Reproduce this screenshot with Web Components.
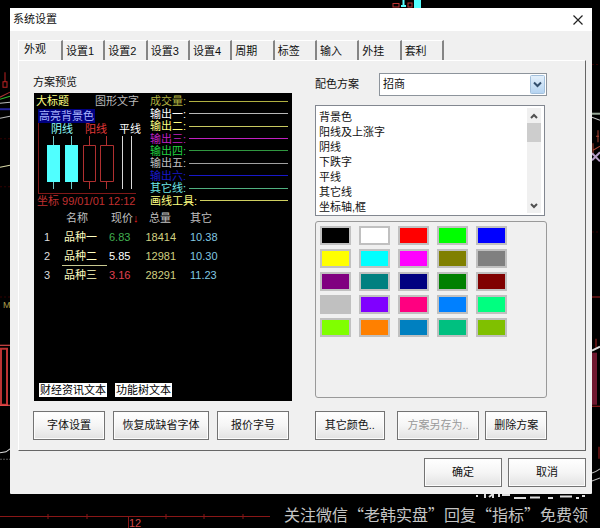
<!DOCTYPE html>
<html lang="zh-CN">
<head>
<meta charset="utf-8">
<title>系统设置</title>
<style>
  html, body { margin: 0; background: #000; }
  body { font: 11px/15px "Liberation Sans", "Noto Sans CJK SC", sans-serif; color: #111; }
</style>
</head>
<body>
<trade-desktop>
  <settings-dialog heading="系统设置">
    <tab-strip slot="tabs" labels="外观,设置1,设置2,设置3,设置4,周期,标签,输入,外挂,套利"></tab-strip>
    <scheme-preview slot="left"></scheme-preview>
    <button-row slot="left">
      <win-button style="--grow:72">字体设置</win-button>
      <win-button style="--grow:96">恢复成缺省字体</win-button>
      <win-button style="--grow:72">报价字号</win-button>
    </button-row>
    <scheme-select slot="right"></scheme-select>
    <item-list slot="right" items="背景色|阳线及上涨字|阴线|下跌字|平线|其它线|坐标轴,框"></item-list>
    <swatch-grid slot="right" colors="#000000 #ffffff #ff0000 #00ff00 #0000ff #ffff00 #00ffff #ff00ff #808000 #808080 #800080 #008080 #000080 #008000 #800000 #c0c0c0 #8000ff #ff0080 #0080ff #00ff80 #80ff00 #ff8000 #0080c0 #00c080 #80c000"></swatch-grid>
    <button-row slot="right" style="--gap:12px">
      <win-button style="--grow:70">其它颜色..</win-button>
      <button-row style="--grow:151;--gap:6px">
        <win-button style="--grow:83" disabled>方案另存为..</win-button>
        <win-button style="--grow:62">删除方案</win-button>
      </button-row>
    </button-row>
    <win-button slot="actions">确定</win-button>
    <win-button slot="actions">取消</win-button>
  </settings-dialog>
  <span slot="caption">关注微信“老韩实盘”回复“指标”免费领</span>
</trade-desktop>

<script>
const define = (name, html, setup) => {
  const template = document.createElement('template');
  template.innerHTML = html;
  customElements.define(name, class extends HTMLElement {
    constructor() {
      super();
      this.attachShadow({ mode: 'open' }).append(template.content.cloneNode(true));
    }
    connectedCallback() {
      if (this.ready) return;
      this.ready = true;
      if (setup) setup(this, this.shadowRoot);
    }
  });
};

define('trade-desktop', `
<style>
  :host { display: grid; grid-template-rows: 1fr auto; min-height: 100vh; box-sizing: border-box; padding: 8px 8px 0 10px; position: relative; }
  .chart { position: absolute; inset: 0; width: 100%; height: 100%; }
  ::slotted(*) { position: relative; }
  footer { position: relative; padding: 8px 4px 3px; text-align: right; font: 16px/24px "Noto Sans CJK SC", sans-serif; color: #c4c4c4; }
</style>
<svg class="chart" viewBox="0 0 600 528" preserveAspectRatio="none" fill="none" aria-hidden="true">
  <g stroke="#300" stroke-dasharray="2 2"><path d="M0 296.500H10M592 64.500H600M592 231.500H600M0 138.500H10M0 186.500H10"/></g>
  <path d="M5 72V81M3 81.500H7V87H3Z" stroke="#b22"/>
  <path d="M0 97L10 92" stroke="#a33"/><path d="M0 99L10 96" stroke="#3b3"/>
  <path d="M0 103L10 102M0 118L10 116" stroke="#bbb"/><path d="M0 109H10" stroke="#229" stroke-width="2"/>
  <path d="M0 167L10 165" stroke="#dda"/>
  <path d="M1 348V404H7V348Z" stroke="#b33" stroke-width="2"/><path d="M0 344.500H10M0 404.500H10" stroke="#f55"/>
  <path d="M0 452L6 451L10 448" stroke="#ddd"/><path d="M0 458.500H10" stroke="#555" stroke-dasharray="2 1"/>
  <path d="M0 515.500H270M128.500 515V528" stroke="#8a1717"/>
  <path d="M48 513V518M87 513V518M166 513V518M204 513V518M243 513V518" stroke="#8a1717"/>
  <path d="M393 3.500H399V7H393ZM408 3H412V7H408Z" stroke="#b33"/>
  <path d="M403.500 0V6M401 6H406" stroke="#5ff" stroke-width="2"/><path d="M414 0H421V8H414Z" fill="#5ff"/>
  <path d="M592 113.500H600" stroke="#9a9" stroke-width="2"/><path d="M592 117L600 120" stroke="#ccc"/>
  <path d="M596 136H599M598 130V142M593 143V155M593 150L600 146" stroke="#a43"/>
  <path d="M592 160L600 152M592 153L600 161" stroke="#b8a0c8" stroke-width="2"/>
  <path d="M592 296.500H600M596 338V347M592 405.500H600M599 446V458" stroke="#a22"/>
  <path d="M592 350L600 346" stroke="#ddd" stroke-width="2"/>
  <path d="M592 352H597V404H592Z" fill="#701830"/>
  <path d="M592 472Q596 471 600 468M592 480L600 477" stroke="#bbb"/>
  <path d="M476 495H478M485 493V497M489 496L493 493V497M499 493V496M502 494H510M514 497H526M530 496.500H540M548 497H553M560 495.500H572M576 497H579M582 495H585" stroke="#ddd" stroke-width="2"/>
  <text x="3" y="307" font-size="9" fill="#aa9d4c">M</text>
  <text x="129" y="526" font-size="11" fill="#d04848">12</text>
</svg>
<slot></slot>
<footer><slot name="caption"></slot></footer>`);

define('settings-dialog', `
<style>
  :host { display: grid; grid-template-rows: 23px 1fr; background: #f0f0f0; border-radius: 1px; }
  header { display: flex; align-items: center; justify-content: space-between; padding: 0 8px 0 3px; background: #fff; }
  h1 { margin: 0; font: inherit; }
  .close { border: 0; padding: 0; background: none; display: grid; }
  .client { padding: 9px 6px 7px 8px; display: flex; flex-direction: column; }
  .panel { flex: 1; display: grid; grid-template-columns: 260fr 232fr; column-gap: 22px; padding: 12px 38px 10px 14px;
    border: 1px solid #fff; border-right-color: #666; border-bottom-color: #666; }
  .left { display: grid; grid-template-rows: 20px 1fr auto; min-width: 0; }
  .left div { padding-top: 2px; }
  .left ::slotted(button-row) { margin-top: 10px; }
  .right { display: grid; grid-template-rows: auto auto 1fr auto; min-width: 0; }
  .actions { display: flex; justify-content: flex-end; gap: 6px; margin-top: 7px; }
  .actions ::slotted(*) { flex: 0 0 78px; }
</style>
<header><h1></h1>
  <button class="close" aria-label="关闭"><svg width="12" height="12" viewBox="0 0 12 12"><path d="M1.500 1.500L10.500 10.500M10.500 1.500L1.500 10.500" stroke="#222" stroke-width="1.200"/></svg></button>
</header>
<div class="client">
  <slot name="tabs"></slot>
  <div class="panel">
    <section class="left"><div>方案预览</div><slot name="left"></slot></section>
    <section class="right"><slot name="right"></slot></section>
  </div>
  <div class="actions"><slot name="actions"></slot></div>
</div>`, (host, root) => { root.querySelector('h1').textContent = host.getAttribute('heading'); });

define('tab-strip', `
<style>
  :host { display: flex; height: 20px; padding-right: 25%; }
  button { box-sizing: border-box; flex: 1 1 42px; padding: 2px 0 0 3px; border: 0; border-top: 1px solid #fff; border-right: 2px solid #858585; background: #f0f0f0; font: inherit; color: inherit; text-align: left; white-space: nowrap; }
  button[aria-selected=true] { flex: 0 0 45px; padding: 0 0 2px 5px; border-left: 1px solid #fff; }
</style>`, (host, root) => {
  host.setAttribute('role', 'tablist');
  host.getAttribute('labels').split(',').forEach((label, i) => {
    const tab = document.createElement('button');
    tab.setAttribute('role', 'tab');
    tab.setAttribute('aria-selected', String(i === 0));
    tab.textContent = label;
    root.append(tab);
  });
});

define('win-button', `
<style>
  :host { display: block; flex: var(--grow, 1) 1 0; min-width: 0; }
  button { width: 100%; height: 29px; padding: 0; border: 1px solid #737373; box-shadow: inset 0 0 0 1px #fcfcfc; background: linear-gradient(#fff, #f5f5f5 50%, #e2e2e2); font: inherit; color: #111; white-space: nowrap; }
  button:disabled { color: #999; }
</style>
<button><slot></slot></button>`, (host, root) => { root.querySelector('button').disabled = host.hasAttribute('disabled'); });

define('button-row', `
<style>:host { display: flex; gap: var(--gap, 8px); flex: var(--grow, 1) 1 0; min-width: 0; }
:host([slot=left]) { padding-right: 4px; }</style><slot></slot>`);

define('scheme-select', `
<style>
  :host { display: grid; grid-template-columns: 64px 1fr; align-items: center; margin-bottom: 9px; }
  .box { display: grid; grid-template-columns: 1fr 17px; }
  select { grid-area: 1 / 1 / 2 / 3; appearance: none; height: 23px; padding: 0 3px; border: 1px solid #8d949c; border-radius: 0; background: #fff; font: inherit; color: inherit; }
  svg { grid-area: 1 / 2; place-self: center start; pointer-events: none; }
</style>
<label for="scheme">配色方案</label>
<div class="box"><select id="scheme"><option>招商</option></select>
<svg width="15" height="19" viewBox="0 0 15 19"><defs><linearGradient id="g" x2="0" y2="1"><stop stop-color="#e4f0fb"/><stop offset="1" stop-color="#b4d3f1"/></linearGradient></defs><rect x=".5" y=".5" width="14" height="18" rx="1" fill="url(#g)" stroke="#a3c0dc"/><path d="M4 7.500L7.500 11L11 7.500" fill="none" stroke="#34506e" stroke-width="2"/></svg></div>`);

define('item-list', `
<style>
  :host { display: grid; grid-template-columns: 1fr 17px; border: 1px solid #828790; background: #fff; padding: 2px 0; margin: 0 2px 5px 0; }
  select { border: 0; outline: 0; padding: 0; margin: 0; background: none; font: inherit; color: inherit; overflow: hidden; scrollbar-width: none; height: 105px; }
  option { display: block; box-sizing: border-box; padding: 0 3px; height: 15px; min-height: 0; line-height: 14px; color: #111; }
  .bar { display: grid; grid-template-rows: 15px 19px 1fr 15px; background: #f0f0f0; margin-right: 3px; }
  .bar button { border: 0; padding: 0; background: none; display: grid; place-items: center; }
  .thumb { background: #cdcdcd; }
  path { fill: none; stroke: #505050; stroke-width: 2; }
</style>
<select size="7" aria-label="配色项目"></select>
<div class="bar">
  <button aria-label="向上"><svg width="8" height="6"><path d="M1 5L4 2L7 5"/></svg></button>
  <div class="thumb"></div><div></div>
  <button aria-label="向下"><svg width="8" height="6"><path d="M1 1L4 4L7 1"/></svg></button>
</div>`, (host, root) => {
  const list = root.querySelector('select');
  host.getAttribute('items').split('|').forEach(text => list.add(new Option(text)));
});

define('swatch-grid', `
<style>
  :host { display: grid; grid-template-columns: repeat(5, 31px); grid-auto-rows: 19px; gap: 4px 8px; align-content: start; padding: 4px; margin-bottom: 13px; border: 1px solid #999; border-radius: 3px; }
  button { padding: 0; border: 2px solid #c0c0c0; }
</style>`, (host, root) => host.getAttribute('colors').split(' ').forEach(color => {
  const swatch = document.createElement('button');
  swatch.style.background = color;
  swatch.setAttribute('aria-label', color);
  root.append(swatch);
}));

define('scheme-preview', `
<style>
  :host { display: flex; flex-direction: column; min-height: 308px; box-sizing: border-box; background: #000; color: #ddd; padding: 2px 4px 4px 2px; margin: 0 1px; }
  .top { display: grid; grid-template-columns: 114px 1fr; }
  .titles { display: flex; justify-content: space-between; padding-right: 11px; line-height: 13px; color: #bbb; }
  .titles b, .lines b { font-weight: 400; }
  .titles b { color: #ffff80; }
  mark { display: block; width: max-content; margin: 1px 0 0 2px; background: #000080; color: #a8b4ff; line-height: 14px; padding: 0 1px; }
  .plot { border: solid #801818; border-width: 0 0 1px 1px; margin: 0 14px 0 2px; height: 70px; }
  .names { display: flex; gap: 12px; padding-left: 12px; line-height: 13px; white-space: nowrap; }
  .plot svg { display: block; overflow: visible; }
  .axis { padding-left: 1px; color: #c03030; line-height: 15px; white-space: nowrap; }
  .lines { display: grid; grid-template-rows: repeat(9, 1fr); height: 112px; line-height: 12px; }
  .lines p { margin: 0; display: flex; align-items: center; gap: 3px; color: var(--c); }
  .lines i { flex: 1; height: 1px; background: var(--l, var(--c)); }
  .lines b { min-width: 35px; }
  table { border-collapse: separate; border-spacing: 0; table-layout: fixed; width: 184px; margin-left: 6px; line-height: 15px; }
  th, td { padding: 2px 0; font-weight: 400; text-align: left; white-space: nowrap; }
  th:nth-child(1) { width: 20px; } th:nth-child(2) { width: 45px; } th:nth-child(3) { width: 35px; } th:nth-child(4) { width: 34px; }
  th { color: #c0c0c0; padding: 2px 0; }
  th:nth-child(2), th:nth-child(3) { padding-left: 4px; box-sizing: border-box; }
  th span { color: #f02020; }
  td:nth-child(1) { padding-left: 2px; }
  td:nth-child(2) { color: #ffffc0; padding-left: 2px; }
  td:nth-child(3) { padding-left: 2px; color: var(--p); }
  td:nth-child(4) { text-align: right; color: #d0d080; }
  th:nth-child(4) { padding-left: 7px; box-sizing: border-box; }
  td:nth-child(5), th:nth-child(5) { padding-left: 14px; }
  td:nth-child(5) { color: #80c8e0; }
  .cursor td:nth-child(2) { padding-bottom: 1px; border-bottom: 1px solid #c8c890; }
  .tags { display: flex; gap: 8px; margin-top: auto; padding-left: 3px; }
  .tags span { background: #fff; color: #000; padding: 0 1px; line-height: 14px; }
</style>
<div class="top">
  <div>
    <div class="titles"><b>大标题</b><span>图形文字</span></div>
    <mark>高亮背景色</mark>
    <div class="plot">
      <div class="names"><span style="color:#90ffff">阴线</span><span style="color:#e03838">阳线</span><span style="color:#fff">平线</span></div>
      <svg width="96" height="54" viewBox="0 0 96 54" fill="none" aria-hidden="true">
        <path d="M14.500 0V53M32.500 0V53" stroke="#70c8c8"/>
        <path d="M8 9H21V46H8ZM26 9H39V46H26Z" fill="#50ffff"/>
        <path d="M50.500 0V9M50.500 46V53M67.500 0V9M67.500 46V53M44.500 9.500H56.500V45.500H44.500ZM61.500 9.500H74.500V45.500H61.500Z" stroke="#b03030"/>
        <path d="M83.500 0V53M92.500 0V53" stroke="#d8d8d8"/>
      </svg>
    </div>
    <div class="axis">坐标 99/01/01 12:12</div>
  </div>
  <div class="lines">
    <p style="--c:#b0b040"><b>成交量:</b><i></i></p>
    <p style="--c:#fff;--l:#b8b8b8"><b>输出一:</b><i></i></p>
    <p style="--c:#ffff80;--l:#c8c860"><b>输出二:</b><i></i></p>
    <p style="--c:#c020c0"><b>输出三:</b><i></i></p>
    <p style="--c:#20d040;--l:#309840"><b>输出四:</b><i></i></p>
    <p style="--c:#c0c0c0;--l:#a0a0a0"><b>输出五:</b><i></i></p>
    <p style="--c:#1818c8"><b>输出六:</b><i></i></p>
    <p style="--c:#70e8e8;--l:#50b080"><b>其它线:</b><i></i></p>
    <p style="--c:#ffff80;--l:#d0d060"><b>画线工具:</b><i></i></p>
  </div>
</div>
<table>
  <thead><tr><th></th><th>名称</th><th>现价<span>↓</span></th><th>总量</th><th>其它</th></tr></thead>
  <tbody>
    <tr style="--p:#40b050"><td>1</td><td>品种一</td><td>6.83</td><td>18414</td><td>10.38</td></tr>
    <tr class="cursor" style="--p:#fff"><td>2</td><td>品种二</td><td>5.85</td><td>12981</td><td>10.30</td></tr>
    <tr style="--p:#e04050"><td>3</td><td>品种三</td><td>3.16</td><td>28291</td><td>11.23</td></tr>
  </tbody>
</table>
<div class="tags"><span>财经资讯文本</span><span>功能树文本</span></div>`);
</script>
</body>
</html>
